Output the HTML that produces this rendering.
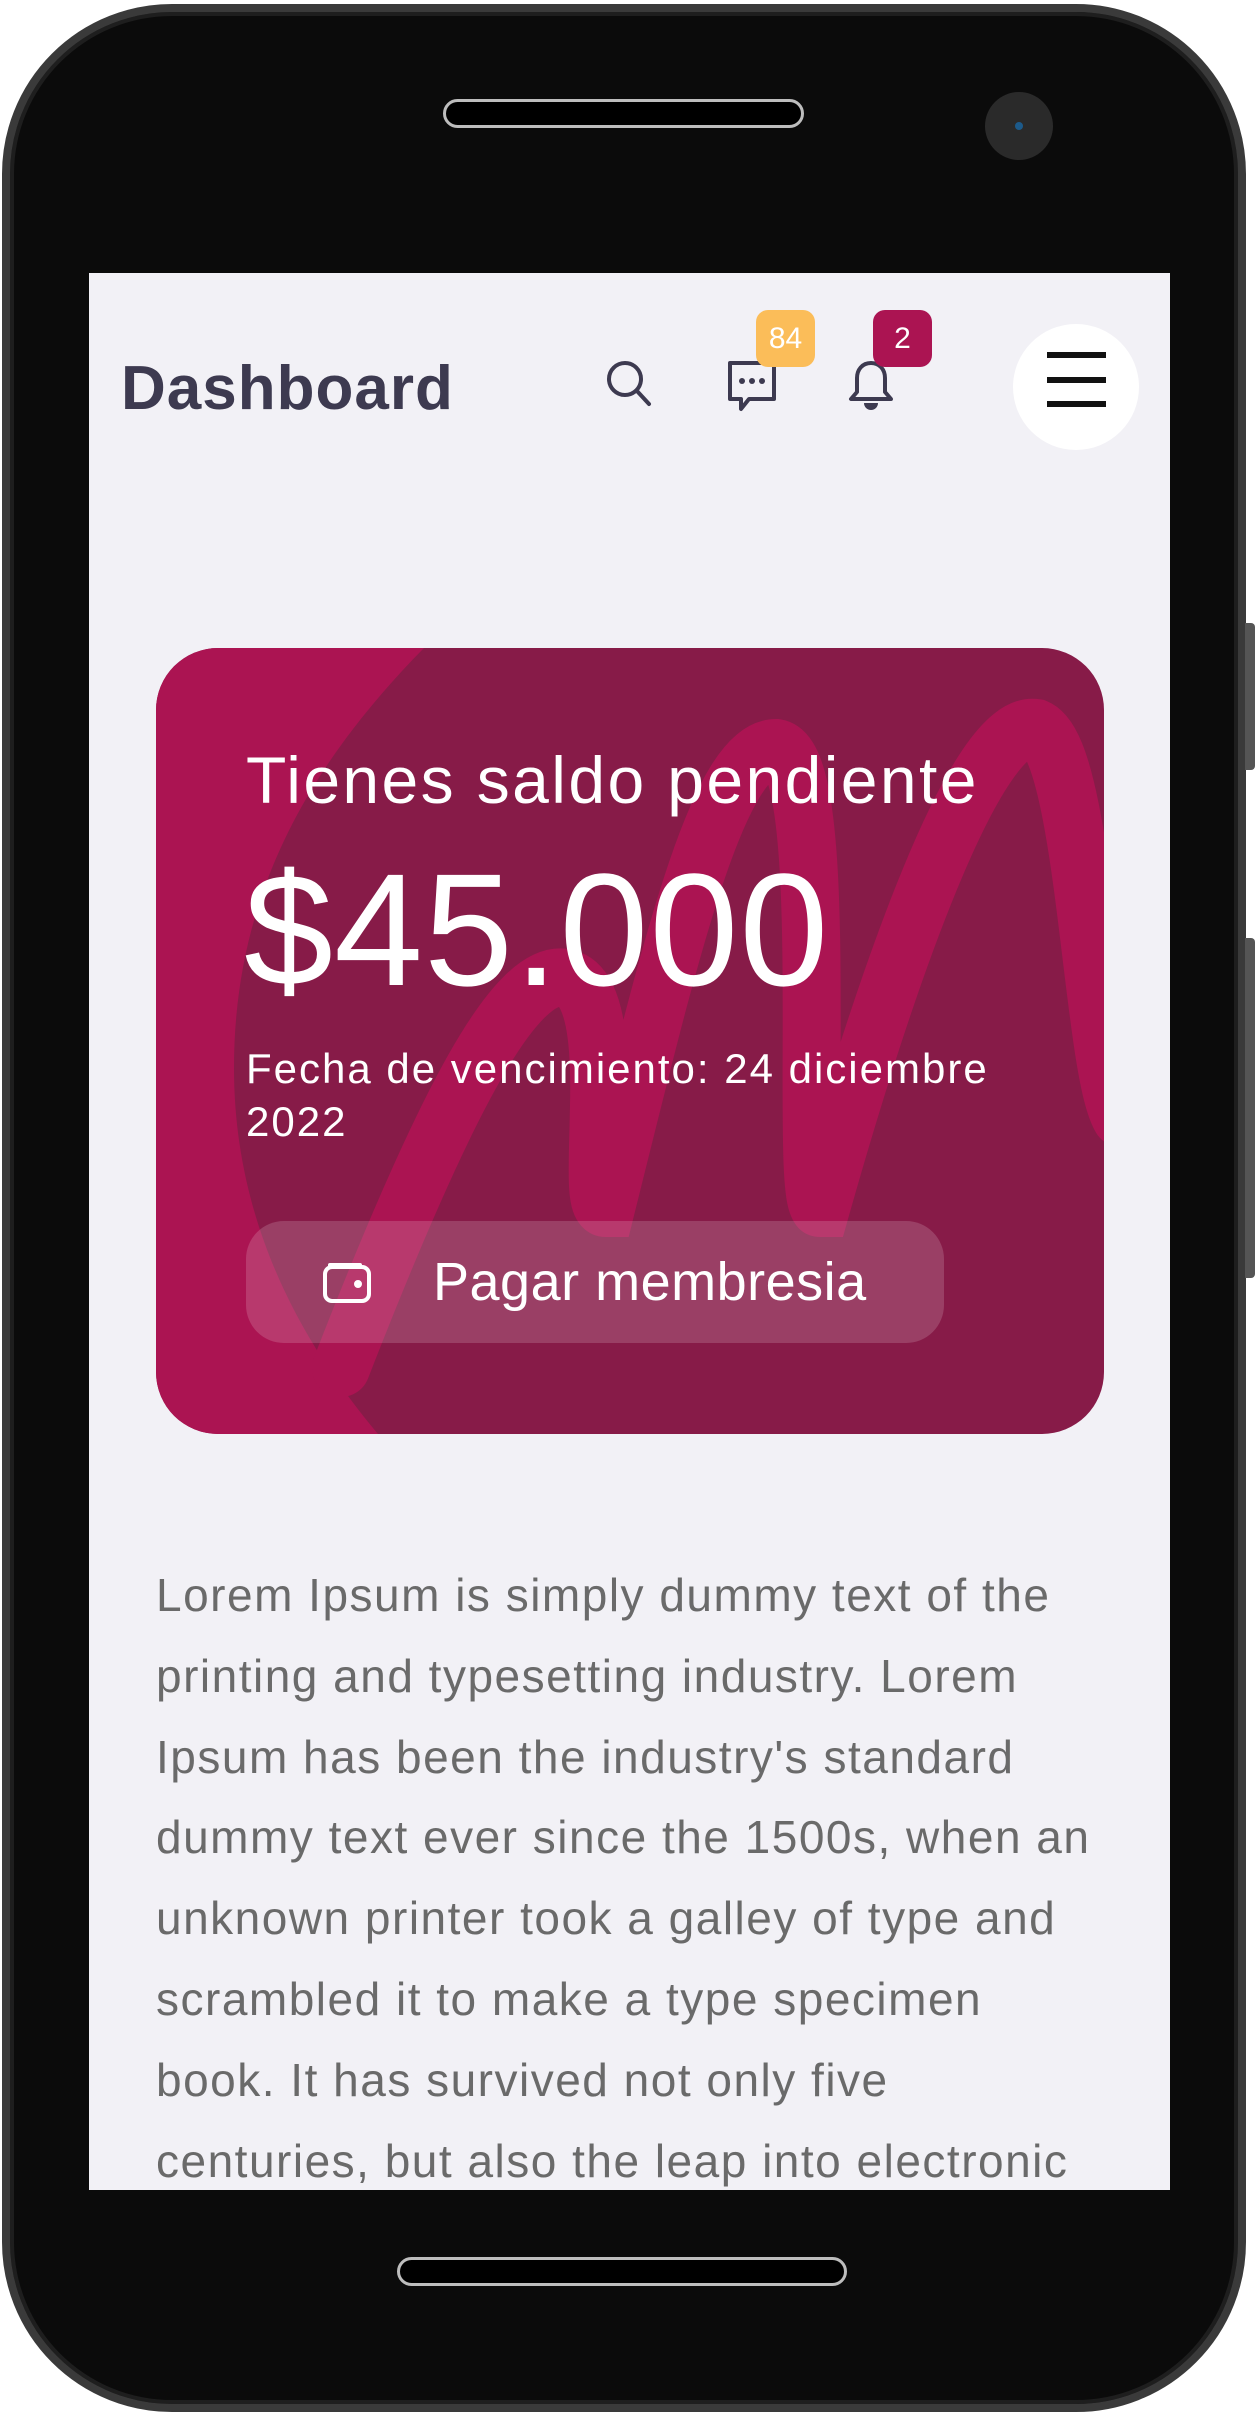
<!DOCTYPE html>
<html><head><meta charset="utf-8"><style>
*{margin:0;padding:0;box-sizing:border-box}
html,body{width:1260px;height:2415px;background:#fff;overflow:hidden;font-family:"Liberation Sans",sans-serif}
.phone{position:absolute;left:2px;top:4px;width:1244px;height:2408px;border-radius:170px;background:#0b0b0b;border:8px solid #3a3a3a;box-shadow:inset 0 0 0 4px #1e1e1e}
.btn{position:absolute;background:#555;width:10px;left:1245px;border-radius:0 4px 4px 0}
.screen{position:absolute;left:89px;top:273px;width:1081px;height:1917px;background:#f2f1f6;overflow:hidden}
.spk{position:absolute;border:3px solid #bdbdbd;background:#000;border-radius:20px}
.cam{position:absolute;left:985px;top:92px;width:68px;height:68px;border-radius:50%;background:#2a2a2a}
.cam:after{content:"";position:absolute;left:30px;top:30px;width:8px;height:8px;border-radius:50%;background:#1c5a8a}
.title{position:absolute;left:32px;top:80px;font-size:62px;font-weight:bold;color:#3d3a50;letter-spacing:1px}
.badge{position:absolute;top:37px;width:59px;height:57px;border-radius:12px;color:#fff;font-size:30px;text-align:center;line-height:57px}
.menu{position:absolute;left:924px;top:51px;width:126px;height:126px;border-radius:50%;background:#fff}
.menu i{position:absolute;left:34px;width:59px;height:6px;background:#111}
.card{position:absolute;left:67px;top:375px;width:948px;height:786px;border-radius:62px;background:#871b48;overflow:hidden;color:#fff}
.card svg{position:absolute;left:0;top:0}
.t1{position:absolute;left:90px;top:94px;font-size:66px;white-space:nowrap;letter-spacing:2.4px}
.t2{position:absolute;left:88px;top:190px;font-size:160px;white-space:nowrap;letter-spacing:1px}
.t3{position:absolute;left:90px;top:394px;font-size:42px;line-height:53px;white-space:nowrap;letter-spacing:2px}
.pay{position:absolute;left:90px;top:573px;width:698px;height:122px;border-radius:38px;background:rgba(255,255,255,.16)}
.pay span{position:absolute;left:187px;top:30px;font-size:54px;letter-spacing:.5px}
.para{position:absolute;left:67px;top:1282px;font-size:46px;line-height:80.8px;color:#6a6a6a;white-space:nowrap;letter-spacing:1.5px}
</style></head><body>
<div class="phone"></div>
<div class="btn" style="top:623px;height:147px"></div>
<div class="btn" style="top:938px;height:340px"></div>
<div class="spk" style="left:443px;top:99px;width:361px;height:29px"></div>
<div class="cam"></div>
<div class="spk" style="left:397px;top:2257px;width:450px;height:29px"></div>
<div class="screen">
 <div class="title">Dashboard</div>
 <svg style="position:absolute;left:514px;top:84px" width="52" height="52" viewBox="0 0 52 52" fill="none" stroke="#3d3a50" stroke-width="4" stroke-linecap="round"><circle cx="22" cy="22" r="16"/><line x1="34" y1="34" x2="46" y2="47"/></svg>
 <svg style="position:absolute;left:636px;top:84px" width="56" height="56" viewBox="0 0 56 56" fill="none" stroke="#3d3a50" stroke-width="4" stroke-linejoin="round"><path d="M5 6h44v36H24l-8 10v-10H5z"/><g fill="#3d3a50" stroke="none"><circle cx="17" cy="24" r="3"/><circle cx="27" cy="24" r="3"/><circle cx="37" cy="24" r="3"/></g></svg>
 <svg style="position:absolute;left:756px;top:84px" width="52" height="56" viewBox="0 0 52 56" fill="none" stroke="#3d3a50" stroke-width="4" stroke-linejoin="round"><path d="M26 6c-9 0-14 7-14 15v14l-6 7h40l-6-7V21c0-8-5-15-14-15z"/><path d="M21 46a5 5 0 0 0 10 0" fill="#3d3a50"/></svg>
 <div class="badge" style="left:667px;background:#fbbd59">84</div>
 <div class="badge" style="left:784px;background:#ab1452">2</div>
 <div class="menu"><i style="top:28px"></i><i style="top:53px"></i><i style="top:77px"></i></div>
 <div class="card">
  <svg width="948" height="786" viewBox="0 0 948 786">
   <path d="M0 0H268C150 120 78 250 78 420C78 580 150 700 222 786H0z" fill="#ab1452"/>
   <path d="M185 720C290 450 360 320 410 330C470 345 425 560 450 560C510 320 560 100 620 100C680 110 640 560 665 560C730 330 820 70 880 80C930 100 935 420 965 470" fill="none" stroke="#ab1452" stroke-width="58" stroke-linecap="round"/>
  </svg>
  <div class="t1">Tienes saldo pendiente</div>
  <div class="t2">$45.000</div>
  <div class="t3">Fecha de vencimiento: 24 diciembre<br>2022</div>
  <div class="pay">
   <svg style="position:absolute;left:76px;top:40px" width="50" height="44" viewBox="0 0 50 44" fill="none" stroke="#fff" stroke-width="4" stroke-linejoin="round"><rect x="3" y="6" width="44" height="34" rx="7"/><path d="M8 6V4h30v2"/><circle cx="36" cy="23" r="2" fill="#fff"/></svg>
   <span>Pagar membresia</span>
  </div>
 </div>
 <div class="para">Lorem Ipsum is simply dummy text of the<br>printing and typesetting industry. Lorem<br>Ipsum has been the industry's standard<br>dummy text ever since the 1500s, when an<br>unknown printer took a galley of type and<br>scrambled it to make a type specimen<br>book. It has survived not only five<br>centuries, but also the leap into electronic<br>typesetting, remaining essentially unchanged.</div>
</div>
</body></html>
